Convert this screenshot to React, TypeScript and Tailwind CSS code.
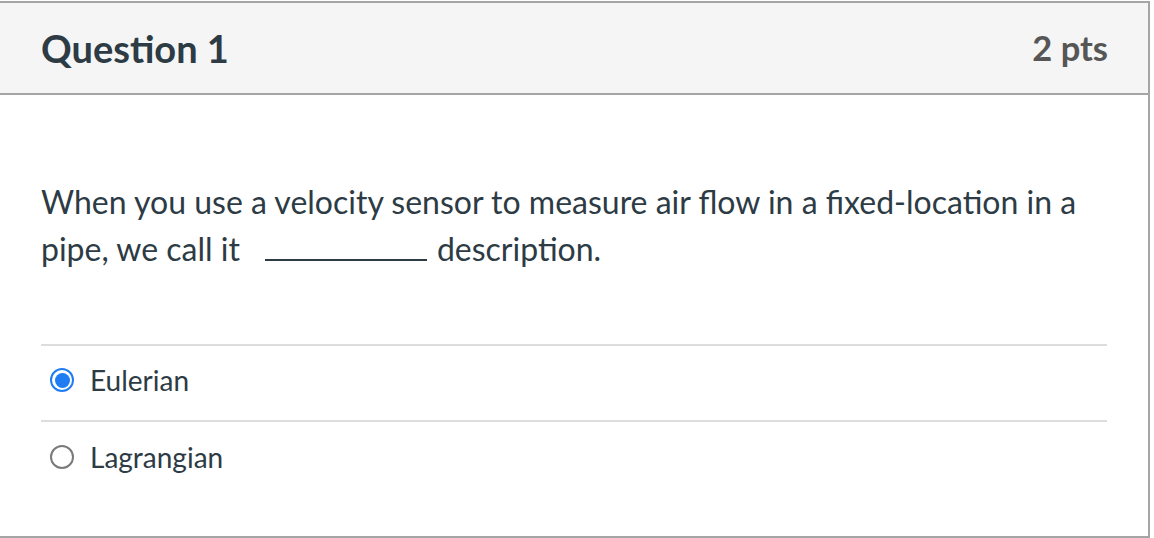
import { useState } from "react";

const answers = ["Eulerian", "Lagrangian"];

export default function App() {
  const [picked, setPicked] = useState("Eulerian");

  return (
    <div className="w-[1154px] h-[538px] bg-white overflow-hidden" style={{ fontFamily: "Lato, 'Noto Sans', sans-serif" }}>
      <div className="mt-px -ml-[2px] w-[1152px] h-[537px] border-2 border-[#a5a5a5] flex flex-col">
        {/* Header */}
        <div className="h-[92px] shrink-0 bg-[#f5f5f5] border-b-2 border-[#a5a5a5] flex items-center justify-between pl-[41px] pr-[40px]">
          <h2 className="text-[38px] font-bold text-[#2d3b45]">Question 1</h2>
          <span className="text-[34.5px] font-bold text-[#565656]">2 pts</span>
        </div>

        {/* Body */}
        <div className="px-[41px] pt-[83px]">
          <p className="text-[32px] leading-[47px] text-[#2d3b45]">
            When you use a velocity sensor to measure air flow in a fixed-location in a pipe, we call it
            <span className="inline-block w-[162px] ml-[25px] mr-[10px] border-b-2 border-[#2d3b45] h-0 align-baseline"></span>
            description.
          </p>

          <div className="mt-[72px] border-t-2 border-[#dddddd]">
            {answers.map((a, i) => (
              <label
                key={a}
                onClick={() => setPicked(a)}
                className={`flex items-center gap-[16px] h-[76px] pb-[6px] pl-[9px] cursor-pointer ${i === 0 ? "border-b-2 border-[#dddddd]" : ""}`}
              >
                {picked === a ? (
                  <span className="w-[24px] h-[24px] rounded-full border-2 border-[#1f7cf2] flex items-center justify-center">
                    <span className="w-[15px] h-[15px] rounded-full bg-[#1f7cf2]"></span>
                  </span>
                ) : (
                  <span className="w-[24px] h-[24px] rounded-full border-2 border-[#7a7a7a]"></span>
                )}
                <span className="text-[28px] text-[#2d3b45]">{a}</span>
              </label>
            ))}
          </div>
        </div>
      </div>
    </div>
  );
}
